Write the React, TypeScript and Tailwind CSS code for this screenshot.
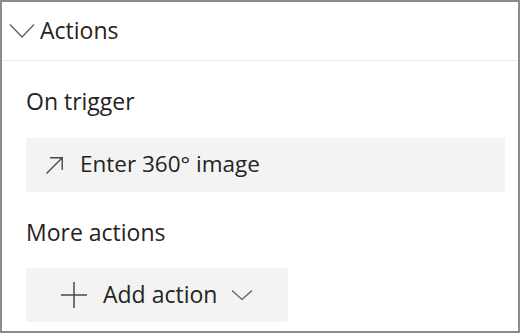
export default function App() {
  return (
    <div
      className="w-[520px] h-[333px] border-2 border-[#8c8c8c] bg-white text-[#252423] overflow-hidden"
      style={{ fontFamily: '"Open Sans", "Noto Sans", sans-serif' }}
    >
      {/* Header */}
      <div className="h-[59px] flex items-center pl-[7px] border-b border-[#ebebeb]">
        <svg width="26" height="16" viewBox="0 0 26 16" className="text-[#605e5c]">
          <path d="M1 1.5 L13 14 L25 1.5" fill="none" stroke="currentColor" strokeWidth="1.3" />
        </svg>
        <span className="ml-[5px] text-[23px] leading-none -mt-[2px] font-medium">Actions</span>
      </div>

      <div className="px-[24px]">
        <div className="mt-[25px] text-[23px] leading-[30px] font-medium">On trigger</div>

        {/* Trigger action */}
        <div className="mt-[22px] h-[54px] w-[479px] bg-[#f3f3f3] flex items-center pl-[19px]">
          <svg width="19" height="19" viewBox="0 0 19 19" className="text-[#4a4846]">
            <path d="M1.5 17.5 L17 2 M5 1.8 L17.2 1.8 L17.2 14" fill="none" stroke="currentColor" strokeWidth="1.4" />
          </svg>
          <span className="ml-[16px] text-[22.5px] leading-none font-medium -mt-[2px]">Enter 360° image</span>
        </div>

        <div className="mt-[25px] text-[23px] leading-[30px] font-medium">More actions</div>

        {/* Add action button */}
        <div className="mt-[21px] h-[54px] w-[262px] bg-[#f3f3f3] rounded-[3px] flex items-center pl-[34px]">
          <svg width="28" height="28" viewBox="0 0 28 28" className="text-[#4a4846]">
            <path d="M14 1 V27 M1 14 H27" fill="none" stroke="currentColor" strokeWidth="1.5" />
          </svg>
          <span className="ml-[15px] text-[23px] leading-none font-medium -mt-[2px]">Add action</span>
          <svg width="22" height="12" viewBox="0 0 22 12" className="ml-[14px] text-[#605e5c]">
            <path d="M1 1.5 L11 10.5 L21 1.5" fill="none" stroke="currentColor" strokeWidth="1.3" />
          </svg>
        </div>
      </div>
    </div>
  );
}
